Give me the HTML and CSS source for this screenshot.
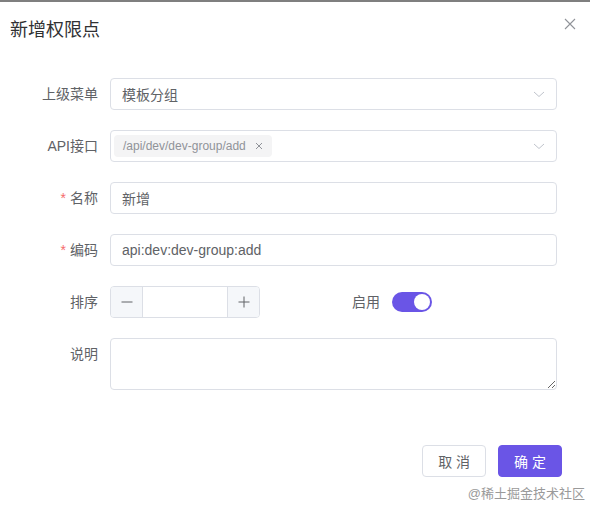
FILE: index.html
```html
<!DOCTYPE html>
<html lang="zh-CN">
  <head>
    <meta charset="UTF-8" />
    <meta name="viewport" content="width=device-width, initial-scale=1.0" />
    <title>新增权限点</title>
    <link rel="stylesheet" href="styles.css">
  </head>

  <body>
    <div class="dialog">
      <div class="dialog-header">
        <span class="dialog-title">新增权限点</span>
        <button class="dialog-close">
          <svg width="12" height="12" viewBox="0 0 12 12">
            <path d="M1 1 L11 11 M11 1 L1 11" stroke="#909399" stroke-width="1.1" fill="none" />
          </svg>
        </button>
      </div>

      <form class="form">
        <div class="form-item">
          <label class="form-label">上级菜单</label>
          <div class="input select">
            <span class="input-text">模板分组</span>
            <svg class="arrow" width="12" height="12" viewBox="0 0 12 12">
              <path d="M1 4 L6 8.5 L11 4" stroke="#c0c4cc" stroke-width="1" fill="none" />
            </svg>
          </div>
        </div>

        <div class="form-item">
          <label class="form-label">API接口</label>
          <div class="input select multi">
            <span class="tag">
              /api/dev/dev-group/add
              <svg class="tag-close" width="8" height="8" viewBox="0 0 8 8">
                <path d="M1 1 L7 7 M7 1 L1 7" stroke="#909399" stroke-width="1" fill="none" />
              </svg>
            </span>
            <svg class="arrow" width="12" height="12" viewBox="0 0 12 12">
              <path d="M1 4 L6 8.5 L11 4" stroke="#c0c4cc" stroke-width="1" fill="none" />
            </svg>
          </div>
        </div>

        <div class="form-item">
          <label class="form-label"><span class="required">*</span>名称</label>
          <div class="input">
            <span class="input-text">新增</span>
          </div>
        </div>

        <div class="form-item">
          <label class="form-label"><span class="required">*</span>编码</label>
          <div class="input">
            <span class="input-text">api:dev:dev-group:add</span>
          </div>
        </div>

        <div class="form-row">
          <div class="form-item">
            <label class="form-label">排序</label>
            <div class="input-number">
              <span class="num-btn minus">
                <svg width="12" height="12" viewBox="0 0 12 12">
                  <path d="M0.5 6 L11.5 6" stroke="#606266" stroke-width="1" fill="none" />
                </svg>
              </span>
              <span class="num-value"></span>
              <span class="num-btn plus">
                <svg width="12" height="12" viewBox="0 0 12 12">
                  <path d="M0.5 6 L11.5 6 M6 0.5 L6 11.5" stroke="#606266" stroke-width="1" fill="none" />
                </svg>
              </span>
            </div>
          </div>
          <div class="form-item">
            <label class="form-label">启用</label>
            <div class="switch-wrap">
              <span class="switch on"><span class="knob"></span></span>
            </div>
          </div>
        </div>

        <div class="form-item">
          <label class="form-label label-top">说明</label>
          <textarea class="textarea"></textarea>
        </div>
      </form>

      <div class="dialog-footer">
        <button class="btn">取 消</button>
        <button class="btn primary">确 定</button>
      </div>

      <div class="watermark">@稀土掘金技术社区</div>
    </div>
  </body>
</html>
```

FILE: styles.css
```css
* {
  margin: 0;
  padding: 0;
  box-sizing: border-box;
  font-family: "Liberation Sans", "Noto Sans CJK SC", sans-serif;
}

body {
  width: 590px;
  height: 507px;
  background-color: #fff;
  overflow: hidden;
}

.dialog {
  border-top: 2px solid #7f7f7f;
}

.dialog-header {
  display: flex;
  justify-content: space-between;
  align-items: flex-start;
  padding: 16px 14px 0 10px;
}

.dialog-title {
  font-size: 18px;
  line-height: 24px;
  color: #303133;
}

.dialog-close {
  border: none;
  background: none;
  width: 12px;
  height: 12px;
  display: flex;
}

.form {
  margin-top: 36px;
  padding-right: 33px;
}

.form-item {
  display: flex;
  margin-bottom: 20px;
}

.form-label {
  width: 110px;
  flex-shrink: 0;
  padding-right: 12px;
  text-align: right;
  font-size: 14px;
  line-height: 32px;
  color: #606266;
}

.required {
  color: #f56c6c;
  margin-right: 4px;
}

.input {
  flex: 1;
  height: 32px;
  border: 1px solid #dcdfe6;
  border-radius: 4px;
  padding: 0 11px;
  display: flex;
  align-items: center;
  font-size: 14px;
  color: #606266;
}

.select {
  justify-content: space-between;
}

.multi {
  padding-left: 3px;
}

.tag {
  display: flex;
  align-items: center;
  height: 22px;
  padding: 0 9px;
  background-color: #f4f4f5;
  border-radius: 4px;
  font-size: 12px;
  color: #909399;
}

.tag-close {
  margin-left: 9px;
}

.form-row {
  display: grid;
  grid-template-columns: 282px 1fr;
}

.input-number {
  width: 150px;
  height: 32px;
  border: 1px solid #dcdfe6;
  border-radius: 4px;
  display: flex;
  overflow: hidden;
}

.num-btn {
  width: 32px;
  background-color: #f5f7fa;
  display: flex;
  align-items: center;
  justify-content: center;
}

.minus {
  border-right: 1px solid #dcdfe6;
}

.plus {
  border-left: 1px solid #dcdfe6;
}

.num-value {
  flex: 1;
}

.switch-wrap {
  height: 32px;
  display: flex;
  align-items: center;
}

.switch {
  width: 40px;
  height: 20px;
  border-radius: 10px;
  background-color: #6a55e6;
  display: flex;
  align-items: center;
  justify-content: flex-end;
  padding: 0 2px;
}

.knob {
  width: 16px;
  height: 16px;
  border-radius: 50%;
  background-color: #fff;
}

.textarea {
  flex: 1;
  height: 52px;
  border: 1px solid #dcdfe6;
  border-radius: 4px;
  padding: 5px 11px;
  font-size: 14px;
  color: #606266;
  resize: vertical;
  outline: none;
}

.dialog-footer {
  display: flex;
  justify-content: flex-end;
  gap: 12px;
  padding-right: 28px;
  margin-top: 55px;
}

.btn {
  height: 32px;
  padding: 0 15px;
  border: 1px solid #dcdfe6;
  border-radius: 4px;
  background-color: #fff;
  color: #606266;
  font-size: 14px;
  cursor: pointer;
}

.btn.primary {
  background-color: #6a55e6;
  border-color: #6a55e6;
  color: #fff;
}

.watermark {
  margin-top: 9px;
  padding-right: 5px;
  text-align: right;
  font-size: 13px;
  line-height: 16px;
  color: #9a9a9a;
}
```
